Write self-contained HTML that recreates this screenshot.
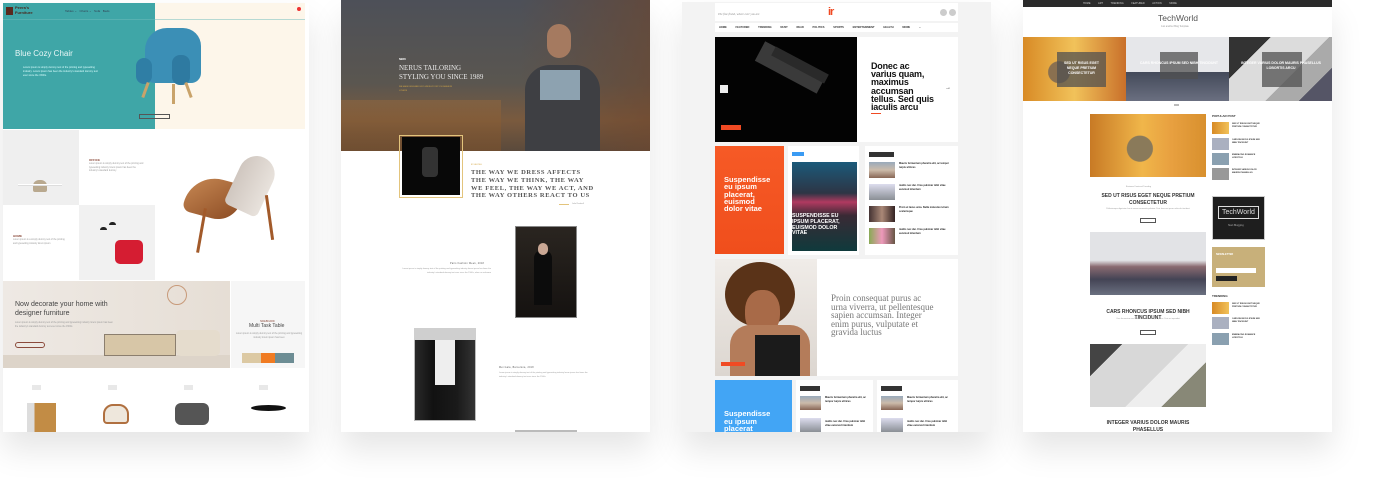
<!DOCTYPE html>
<html><head><meta charset="utf-8"><style>
*{margin:0;padding:0;box-sizing:border-box}
body{width:1382px;height:482px;background:#fff;position:relative;overflow:hidden;font-family:"Liberation Sans",sans-serif}
.a{position:absolute}
.sh{box-shadow:0 18px 30px rgba(0,0,0,.10)}
.t{position:absolute;font-size:3px;color:#999;line-height:4px}
.ln{position:absolute;height:1px;background:#ccc}
</style></head><body>

<!-- PANEL 1 -->
<div class="a sh" style="left:3px;top:3px;width:306px;height:429px;background:#fff"></div>
<div class="a" style="left:3px;top:3px;width:152px;height:126px;background:#3fa6a7"></div>
<div class="a" style="left:155px;top:3px;width:150px;height:126px;background:#fdf6ea"></div>
<div class="ln" style="left:3px;top:19px;width:302px;background:#6fbcbc;opacity:.5"></div>
<div class="a" style="left:6px;top:7px;width:7px;height:8px;background:#5a2a1f"></div>
<div class="a" style="left:15px;top:6px;font-size:4px;color:#4a2a20;font-weight:bold;line-height:4.5px">Peera's<br>Furniture</div>
<div class="t" style="left:65px;top:9px;color:#345">Tables ⌄ &nbsp; Chairs ⌄ &nbsp; Sofa &nbsp; Beds</div>
<div class="a" style="left:297px;top:7px;width:4px;height:4px;border-radius:50%;background:#e33"></div>
<div class="a" style="left:15px;top:49px;font-size:8px;color:#e8f6f6">Blue Cozy Chair</div>
<div class="t" style="left:23px;top:66px;width:75px;color:#dff;font-size:2.5px;line-height:4px">Lorem ipsum is simply dummy text of the printing and typesetting industry. Lorem ipsum has been the industry's standard dummy text ever since the 1500s.</div>
<div class="a" style="left:139px;top:114px;width:31px;height:5px;border:1px solid #555"></div>
<!-- blue chair -->
<div class="a" style="left:145px;top:28px;width:56px;height:55px;background:#3b8fb6;border-radius:22px 18px 10px 10px"></div>
<div class="a" style="left:136px;top:58px;width:16px;height:26px;background:#2f7ea5;border-radius:8px"></div>
<div class="a" style="left:172px;top:55px;width:18px;height:30px;background:#2e7aa1;border-radius:8px"></div>
<div class="a" style="left:144px;top:82px;width:3px;height:16px;background:#c9a36a;transform:rotate(20deg)"></div>
<div class="a" style="left:172px;top:84px;width:3px;height:20px;background:#c9a36a"></div>
<div class="a" style="left:187px;top:82px;width:3px;height:16px;background:#c9a36a;transform:rotate(-20deg)"></div>
<!-- second row -->
<div class="a" style="left:3px;top:130px;width:76px;height:75px;background:#efefef"></div>
<div class="a" style="left:33px;top:180px;width:14px;height:12px;background:#b9a98f;border-radius:6px 6px 2px 2px"></div>
<div class="a" style="left:18px;top:184px;width:44px;height:2px;background:#fff;border-bottom:1px solid #ddd"></div>
<div class="t" style="left:89px;top:158px;color:#8b4a3b;font-weight:bold">OFFICE</div>
<div class="t" style="left:89px;top:163px;width:55px;font-size:2.3px;line-height:3.5px">Lorem ipsum is simply dummy text of the printing and typesetting industry lorem ipsum has been the industry's standard dummy</div>
<div class="a" style="left:79px;top:205px;width:76px;height:75px;background:#f1f1f1"></div>
<div class="a" style="left:115px;top:240px;width:28px;height:24px;background:#d51d32;border-radius:5px"></div>
<div class="a" style="left:100px;top:227px;width:7px;height:3px;background:#222;border-radius:3px 3px 0 0"></div>
<div class="a" style="left:109px;top:222px;width:7px;height:3px;background:#222;border-radius:3px 3px 0 0"></div>
<div class="t" style="left:13px;top:234px;color:#8b4a3b;font-weight:bold">HOME</div>
<div class="t" style="left:13px;top:239px;width:55px;font-size:2.3px;line-height:3.5px">Lorem ipsum is a simply dummy text of the printing and typesetting industry lorem ipsum</div>
<!-- wood chair -->
<div class="a" style="left:186px;top:178px;width:55px;height:40px;background:linear-gradient(135deg,#c98a55,#8a4a22);border-radius:40px 10px 30px 10px;transform:rotate(15deg)"></div>
<div class="a" style="left:234px;top:155px;width:36px;height:58px;background:linear-gradient(90deg,#d0c7c0,#e8e2dc);border-radius:20px 20px 6px 6px;transform:rotate(25deg)"></div>
<div class="a" style="left:200px;top:208px;width:3px;height:45px;background:#a25a2a;transform:rotate(10deg)"></div>
<div class="a" style="left:268px;top:195px;width:3px;height:45px;background:#a25a2a;transform:rotate(-8deg)"></div>
<!-- banner -->
<div class="a" style="left:3px;top:281px;width:227px;height:87px;background:linear-gradient(90deg,#eee9e4,#e6ded5)"></div>
<div class="a" style="left:3px;top:355px;width:227px;height:13px;background:#ddd4c9"></div>
<div class="a" style="left:104px;top:334px;width:72px;height:22px;background:#d7c6a7;border:1px solid #8b7e6e"></div>
<div class="a" style="left:176px;top:330px;width:44px;height:26px;background:#e5dccd;border-radius:5px"></div>
<div class="a" style="left:167px;top:285px;width:20px;height:20px;border:1px solid #c89a7a;border-radius:50%"></div>
<div class="a" style="left:15px;top:300px;font-size:7px;color:#444;line-height:9px">Now decorate your home with<br>designer furniture</div>
<div class="t" style="left:15px;top:322px;width:100px;font-size:2.3px;line-height:3.5px">Lorem ipsum is simply dummy text of the printing and typesetting industry lorem ipsum has been the industry's standard dummy text ever since the 1500s</div>
<div class="a" style="left:15px;top:342px;width:30px;height:6px;border:1px solid #8b4a3b;border-radius:4px"></div>
<div class="a" style="left:231px;top:281px;width:74px;height:87px;background:#f6f6f6"></div>
<div class="t" style="left:260px;top:320px;font-size:2.5px;color:#8b4a3b">SIDEBOARD</div>
<div class="a" style="left:249px;top:323px;font-size:5px;color:#444">Multi Task Table</div>
<div class="t" style="left:236px;top:333px;width:66px;font-size:2.3px;text-align:center;line-height:3.5px">Lorem ipsum is simply dummy text of the printing and typesetting industry lorem ipsum has been</div>
<div class="a" style="left:242px;top:353px;width:52px;height:10px;background:linear-gradient(90deg,#dcc9a3 0 37%,#f07b22 37% 63%,#6d8d94 63%)"></div>
<!-- products -->
<div class="a" style="left:32px;top:385px;width:9px;height:5px;background:#e8e8e8"></div>
<div class="a" style="left:108px;top:385px;width:9px;height:5px;background:#e8e8e8"></div>
<div class="a" style="left:184px;top:385px;width:9px;height:5px;background:#e8e8e8"></div>
<div class="a" style="left:259px;top:385px;width:9px;height:5px;background:#e8e8e8"></div>
<div class="a" style="left:27px;top:403px;width:29px;height:29px;background:linear-gradient(90deg,#ddd 0 25%,#c28c45 25%)"></div>
<div class="a" style="left:103px;top:404px;width:26px;height:20px;background:#eee7dc;border-radius:10px 10px 4px 4px;border:2px solid #b07040"></div>
<div class="a" style="left:175px;top:403px;width:34px;height:22px;background:#555;border-radius:6px"></div>
<div class="a" style="left:251px;top:405px;width:35px;height:6px;background:#111;border-radius:50%"></div>

<!-- PANEL 2 -->
<div class="a sh" style="left:341px;top:0;width:309px;height:432px;background:#fff"></div>
<div class="a" style="left:341px;top:0;width:309px;height:151px;background:linear-gradient(180deg,#4d5058 0%,#5a5650 55%,#7a5a3e 80%,#5a4a3c 100%)"></div>
<div class="a" style="left:341px;top:100px;width:160px;height:51px;background:linear-gradient(180deg,rgba(160,110,60,.4),rgba(120,80,45,.7))"></div>
<div class="a" style="left:520px;top:0;width:130px;height:151px;background:linear-gradient(90deg,rgba(0,0,0,0),rgba(110,70,45,.6))"></div>
<div class="a" style="left:525px;top:65px;width:75px;height:86px;background:#3e3f43;border-radius:25px 25px 0 0"></div>
<div class="a" style="left:540px;top:70px;width:40px;height:30px;background:#8da2b0"></div>
<div class="a" style="left:547px;top:24px;width:24px;height:34px;background:#a57a60;border-radius:12px"></div>
<div class="a" style="left:399px;top:58px;font-size:2.5px;color:#fff;font-weight:bold">NERU</div>
<div class="a" style="left:399px;top:64px;font-family:'Liberation Serif',serif;font-size:7px;color:#e8e8e8;line-height:9px">NERUS TAILORING<br>STYLING YOU SINCE 1989</div>
<div class="a" style="left:399px;top:85px;font-size:2px;color:#d4a848;width:60px;line-height:4px">WE HAVE DESIGNED EXCLUSIVELY FOR YOU FASHION LOVERS</div>
<div class="a" style="left:399px;top:135px;width:64px;height:63px;border:1px solid #e3c47c"></div>
<div class="a" style="left:402px;top:137px;width:58px;height:58px;background:#080808"></div>
<div class="a" style="left:422px;top:147px;width:16px;height:30px;background:#333;border-radius:4px"></div>
<div class="a" style="left:471px;top:164px;font-size:2px;color:#d4a848">BY HEYSEL</div>
<div class="a" style="left:471px;top:169px;font-family:'Liberation Serif',serif;font-size:6.5px;font-weight:bold;color:#555;line-height:7.8px;letter-spacing:.6px">THE WAY WE DRESS AFFECTS<br>THE WAY WE THINK, THE WAY<br>WE FEEL, THE WAY WE ACT, AND<br>THE WAY OTHERS REACT TO US</div>
<div class="a" style="left:559px;top:204px;width:10px;height:1px;background:#e3c47c"></div>
<div class="t" style="left:572px;top:202px;font-size:2px">Julia Rodwell</div>
<div class="a" style="left:515px;top:226px;width:62px;height:92px;background:linear-gradient(180deg,#2a2520,#151210);border:1px solid #888"></div>
<div class="a" style="left:534px;top:250px;width:18px;height:55px;background:#0c0c0c;border-radius:8px 8px 0 0"></div>
<div class="a" style="left:538px;top:243px;width:10px;height:12px;background:#c9a794;border-radius:5px"></div>
<div class="t" style="left:450px;top:262px;font-size:2.3px;color:#555;letter-spacing:.3px">Paris Fashion Week, 2018</div>
<div class="t" style="left:401px;top:268px;width:90px;font-size:2px;line-height:3.8px;text-align:right">Lorem ipsum is simply dummy text of the printing and typesetting industry lorem ipsum has been the industry's standard dummy text ever since the 1500s, when an unknown</div>
<div class="a" style="left:414px;top:328px;width:62px;height:93px;background:linear-gradient(90deg,#2a2a2a,#111 30%,#1a1a1a 70%,#333);border:1px solid #bbb"></div>
<div class="a" style="left:435px;top:340px;width:20px;height:45px;background:#eee"></div>
<div class="a" style="left:414px;top:328px;width:62px;height:12px;background:#cfcfcf"></div>
<div class="t" style="left:499px;top:366px;font-size:2.3px;color:#555;letter-spacing:.3px">Met Gala, Barcelona, 2018</div>
<div class="t" style="left:499px;top:372px;width:90px;font-size:2px;line-height:3.8px">Lorem ipsum is simply dummy text of the printing and typesetting industry lorem ipsum has been the industry's standard dummy text ever since the 1500s</div>
<div class="a" style="left:515px;top:430px;width:62px;height:2px;background:#bbb"></div>

<!-- PANEL 3 -->
<div class="a sh" style="left:682px;top:2px;width:309px;height:430px;background:#f3f3f3"></div>
<div class="a" style="left:715px;top:3px;width:243px;height:18px;background:#fff"></div>
<div class="t" style="left:718px;top:12px;font-family:'Liberation Serif',serif;font-size:3px;color:#888;font-style:italic">The fine finish, where ever you are</div>
<div class="a" style="left:828px;top:6px;font-size:11px;font-weight:bold;color:#f04a23;letter-spacing:-1px">ir</div>
<div class="a" style="left:940px;top:9px;width:7px;height:7px;border-radius:50%;background:#ccc"></div>
<div class="a" style="left:949px;top:9px;width:7px;height:7px;border-radius:50%;background:#ccc"></div>
<div class="a" style="left:715px;top:23px;width:243px;height:9px;background:#fff"></div>
<div class="t" style="left:719px;top:26px;font-size:2.6px;color:#333;font-weight:bold;word-spacing:8px">HOME FEATURED TRENDING MUST&nbsp;READ POLITICS SPORTS ENTERTAINMENT HEALTH MORE&nbsp;⌄</div>
<div class="a" style="left:715px;top:37px;width:142px;height:105px;background:#030303"></div>
<div class="a" style="left:760px;top:40px;width:70px;height:22px;background:#3a3a3a;transform:rotate(28deg);transform-origin:left"></div>
<div class="a" style="left:770px;top:60px;width:60px;height:10px;background:#2a2a2a;transform:rotate(28deg)"></div>
<div class="a" style="left:720px;top:85px;width:8px;height:8px;background:#eee"></div>
<div class="a" style="left:721px;top:125px;width:20px;height:5px;background:#f04a23"></div>
<div class="a" style="left:857px;top:37px;width:101px;height:105px;background:#fff"></div>
<div class="a" style="left:871px;top:62px;font-size:9px;font-weight:bold;color:#111;line-height:8.2px;letter-spacing:-.2px">Donec ac<br>varius quam,<br>maximus<br>accumsan<br>tellus. Sed quis<br>iaculis arcu</div>
<div class="a" style="left:871px;top:113px;width:10px;height:1px;background:#f04a23"></div>
<div class="a" style="left:945px;top:85px;font-size:6px;color:#333">→</div>
<div class="a" style="left:715px;top:146px;width:69px;height:108px;background:linear-gradient(180deg,#f65a26,#f04e1c)"></div>
<div class="a" style="left:724px;top:176px;font-size:7.5px;font-weight:bold;color:#fff;line-height:7.3px">Suspendisse<br>eu ipsum<br>placerat,<br>euismod<br>dolor vitae</div>
<div class="a" style="left:788px;top:146px;width:71px;height:109px;background:#fff"></div>
<div class="a" style="left:792px;top:152px;width:12px;height:4px;background:#3a9bf3"></div>
<div class="a" style="left:792px;top:162px;width:65px;height:89px;background:linear-gradient(180deg,#1b5a7a 0%,#2d3545 35%,#b03a60 45%,#3a2a35 60%,#0f3a3c 100%)"></div>
<div class="a" style="left:792px;top:214px;font-size:5.3px;color:#fff;font-weight:bold;line-height:5.8px">SUSPENDISSE EU<br>IPSUM PLACERAT,<br>EUISMOD DOLOR<br>VITAE</div>
<div class="a" style="left:865px;top:146px;width:93px;height:109px;background:#fff"></div>
<div class="a" style="left:869px;top:152px;width:25px;height:5px;background:#333"></div>
<div class="a" style="left:869px;top:162px;width:26px;height:16px;background:linear-gradient(180deg,#9ab 0,#cba 50%,#865 100%)"></div>
<div class="a" style="left:869px;top:184px;width:26px;height:16px;background:linear-gradient(180deg,#dde,#8a8f95)"></div>
<div class="a" style="left:869px;top:206px;width:26px;height:16px;background:linear-gradient(90deg,#433,#a87,#322)"></div>
<div class="a" style="left:869px;top:228px;width:26px;height:16px;background:linear-gradient(90deg,#8a5,#e9b,#654)"></div>
<div class="t" style="left:899px;top:162px;width:55px;font-size:2.5px;color:#222;font-weight:bold;line-height:3.6px">Mauris fermentum pharetra elit, ac tempor turpis ultrices</div>
<div class="t" style="left:899px;top:184px;width:55px;font-size:2.5px;color:#222;font-weight:bold;line-height:3.6px">mattis nec dui. Cras pulvinar nibh vitae euismod interdum</div>
<div class="t" style="left:899px;top:206px;width:55px;font-size:2.5px;color:#222;font-weight:bold;line-height:3.6px">Proin et lacus urna. Nulla molestie rutrum scelerisque</div>
<div class="t" style="left:899px;top:228px;width:55px;font-size:2.5px;color:#222;font-weight:bold;line-height:3.6px">mattis nec dui. Cras pulvinar nibh vitae euismod interdum</div>
<div class="a" style="left:715px;top:259px;width:102px;height:117px;background:linear-gradient(180deg,#f0ece8 0%,#dcd6d0 100%)"></div>
<div class="a" style="left:725px;top:262px;width:70px;height:65px;background:#5a3318;border-radius:50%"></div>
<div class="a" style="left:745px;top:290px;width:35px;height:45px;background:#a86a48;border-radius:45%"></div>
<div class="a" style="left:730px;top:325px;width:80px;height:51px;background:#b47c5a;border-radius:20px 20px 0 0"></div>
<div class="a" style="left:755px;top:335px;width:45px;height:41px;background:#1b1b1b"></div>
<div class="a" style="left:721px;top:362px;width:24px;height:4px;background:#f04a23"></div>
<div class="a" style="left:817px;top:259px;width:141px;height:117px;background:#fff"></div>
<div class="a" style="left:831px;top:294px;font-family:'Liberation Serif',serif;font-size:9px;color:#777;line-height:8.5px">Proin consequat purus ac<br>urna viverra, ut pellentesque<br>sapien accumsan. Integer<br>enim purus, vulputate et<br>gravida luctus</div>
<div class="a" style="left:715px;top:380px;width:77px;height:52px;background:#42a5f5"></div>
<div class="a" style="left:724px;top:410px;font-size:7.5px;font-weight:bold;color:#fff;line-height:7.5px">Suspendisse<br>eu ipsum<br>placerat</div>
<div class="a" style="left:796px;top:380px;width:77px;height:52px;background:#fff"></div>
<div class="a" style="left:877px;top:380px;width:81px;height:52px;background:#fff"></div>
<div class="a" style="left:800px;top:386px;width:20px;height:5px;background:#333"></div>
<div class="a" style="left:881px;top:386px;width:21px;height:5px;background:#333"></div>
<div class="a" style="left:800px;top:396px;width:21px;height:14px;background:linear-gradient(180deg,#9ab,#cba,#865)"></div>
<div class="a" style="left:881px;top:396px;width:22px;height:14px;background:linear-gradient(180deg,#9ab,#cba,#865)"></div>
<div class="a" style="left:800px;top:418px;width:21px;height:14px;background:linear-gradient(180deg,#dde,#8a8f95)"></div>
<div class="a" style="left:881px;top:418px;width:22px;height:14px;background:linear-gradient(180deg,#dde,#8a8f95)"></div>
<div class="t" style="left:825px;top:396px;width:45px;font-size:2.5px;color:#222;font-weight:bold;line-height:4px">Mauris fermentum pharetra elit, ac tempor turpis ultrices</div>
<div class="t" style="left:907px;top:396px;width:45px;font-size:2.5px;color:#222;font-weight:bold;line-height:4px">Mauris fermentum pharetra elit, ac tempor turpis ultrices</div>
<div class="t" style="left:825px;top:420px;width:45px;font-size:2.5px;color:#222;font-weight:bold;line-height:4px">mattis nec dui. Cras pulvinar nibh vitae euismod interdum</div>
<div class="t" style="left:907px;top:420px;width:45px;font-size:2.5px;color:#222;font-weight:bold;line-height:4px">mattis nec dui. Cras pulvinar nibh vitae euismod interdum</div>

<!-- PANEL 4 -->
<div class="a sh" style="left:1023px;top:0;width:309px;height:432px;background:#fff"></div>
<div class="a" style="left:1023px;top:0;width:309px;height:7px;background:#2b2b2b"></div>
<div class="t" style="left:1083px;top:2px;font-size:2.5px;color:#ccc;word-spacing:7px">HOME ART TRENDING FEATURED ACTION MORE</div>
<div class="a" style="left:1158px;top:13px;font-size:8.5px;color:#555">TechWorld</div>
<div class="t" style="left:1161px;top:25px;font-size:2.3px">Just another Blog Template</div>
<div class="a" style="left:1023px;top:37px;width:103px;height:64px;background:radial-gradient(circle at 35% 55%,#8a7050 0 14%,transparent 15%),linear-gradient(90deg,#d88a25,#f1c25a 50%,#c9702a)"></div>
<div class="a" style="left:1126px;top:37px;width:103px;height:64px;background:linear-gradient(180deg,#e6e7ea 0 55%,#444a5a 55%,#6a6f80)"></div>
<div class="a" style="left:1229px;top:37px;width:103px;height:64px;background:linear-gradient(135deg,#333 0 25%,#dcdcdc 25% 60%,#aaa 60% 80%,#556 80%)"></div>
<div class="a" style="left:1057px;top:52px;width:49px;height:35px;background:rgba(80,80,80,.75)"></div>
<div class="a" style="left:1160px;top:52px;width:38px;height:27px;background:rgba(80,80,80,.75)"></div>
<div class="a" style="left:1262px;top:52px;width:40px;height:35px;background:rgba(80,80,80,.75)"></div>
<div class="a" style="left:1059px;top:61px;width:45px;font-size:3.5px;color:#fff;font-weight:bold;text-align:center;line-height:5px">SED UT RISUS EGET NEQUE PRETIUM CONSECTETUR</div>
<div class="a" style="left:1138px;top:61px;width:82px;font-size:3.5px;color:#fff;font-weight:bold;text-align:center;line-height:5px">CARS RHONCUS IPSUM SED NIBH TINCIDUNT</div>
<div class="a" style="left:1240px;top:61px;width:82px;font-size:3.5px;color:#fff;font-weight:bold;text-align:center;line-height:5px">INTEGER VARIUS DOLOR MAURIS PHASELLUS LOBORTIS ARCU</div>
<div class="a" style="left:1174px;top:104px;width:5px;height:2px;background:#bbb"></div>
<div class="a" style="left:1090px;top:114px;width:116px;height:63px;background:radial-gradient(circle at 43% 55%,#8a7a5a 0 17%,transparent 18%),linear-gradient(90deg,#c87a25,#f0b64a 45%,#e8a040 70%,#d8902e)"></div>
<div class="t" style="left:1126px;top:185px;font-size:2px">Business Featured Trending</div>
<div class="a" style="left:1098px;top:193px;width:100px;font-size:5px;font-weight:bold;color:#333;text-align:center;line-height:7px">SED UT RISUS EGET NEQUE PRETIUM CONSECTETUR</div>
<div class="t" style="left:1093px;top:208px;width:110px;font-size:2px;text-align:center;line-height:3.5px">Pellentesque dignissim leo at massa venenatis pulvinar. Duis rhoncus ipsum vehicula tincidunt</div>
<div class="a" style="left:1140px;top:218px;width:16px;height:5px;border:1px solid #555"></div>
<div class="a" style="left:1090px;top:232px;width:116px;height:63px;background:linear-gradient(180deg,#e2e3e6 0 45%,#8a6a70 55%,#445 75%,#6a7080)"></div>
<div class="a" style="left:1098px;top:309px;width:100px;font-size:5px;font-weight:bold;color:#333;text-align:center">CARS RHONCUS IPSUM SED NIBH TINCIDUNT</div>
<div class="t" style="left:1093px;top:318px;width:110px;font-size:2px;text-align:center;line-height:3.5px">Cars fermentum sed nibh tincidunt ullamcorper purus. Duis ac imperdiet</div>
<div class="a" style="left:1140px;top:330px;width:16px;height:5px;border:1px solid #555"></div>
<div class="a" style="left:1090px;top:344px;width:116px;height:63px;background:linear-gradient(135deg,#444 0 18%,#d8d8d8 18% 55%,#eee 55% 75%,#887 75%)"></div>
<div class="a" style="left:1098px;top:420px;width:100px;font-size:5px;font-weight:bold;color:#333;text-align:center;line-height:7px">INTEGER VARIUS DOLOR MAURIS PHASELLUS</div>
<!-- sidebar -->
<div class="t" style="left:1212px;top:114px;font-size:3px;color:#333;font-weight:bold">POPULAR POST</div>
<div class="a" style="left:1212px;top:122px;width:17px;height:12px;background:linear-gradient(90deg,#d88a25,#f1c25a)"></div>
<div class="a" style="left:1212px;top:138px;width:17px;height:12px;background:#aab0c0"></div>
<div class="a" style="left:1212px;top:153px;width:17px;height:12px;background:#8aa0b0"></div>
<div class="a" style="left:1212px;top:168px;width:17px;height:12px;background:#999"></div>
<div class="t" style="left:1232px;top:123px;width:30px;font-size:2px;color:#333;font-weight:bold;line-height:3.3px">SED UT RISUS EGET NEQUE PRETIUM CONSECTETUR</div>
<div class="t" style="left:1232px;top:139px;width:30px;font-size:2px;color:#333;font-weight:bold;line-height:3.3px">CARS RHONCUS IPSUM SED NIBH TINCIDUNT</div>
<div class="t" style="left:1232px;top:154px;width:30px;font-size:2px;color:#333;font-weight:bold;line-height:3.3px">EMBRACING ROMANCE LIFESTYLE</div>
<div class="t" style="left:1232px;top:169px;width:30px;font-size:2px;color:#333;font-weight:bold;line-height:3.3px">INTEGER VARIUS DOLOR MAURIS PHASELLUS</div>
<div class="a" style="left:1212px;top:196px;width:53px;height:44px;background:#1e1e1e;border:1px solid #ccc"></div>
<div class="a" style="left:1218px;top:206px;width:41px;height:13px;border:1px solid #ddd;font-size:7px;color:#ddd;text-align:center;line-height:12px">TechWorld</div>
<div class="t" style="left:1228px;top:224px;font-size:2.5px;color:#aaa">Start Blogging</div>
<div class="a" style="left:1212px;top:247px;width:53px;height:40px;background:#c8b07a"></div>
<div class="t" style="left:1216px;top:253px;font-size:2.5px;color:#fff;font-weight:bold">NEWSLETTER</div>
<div class="a" style="left:1216px;top:268px;width:40px;height:5px;background:#fff"></div>
<div class="a" style="left:1216px;top:276px;width:21px;height:5px;background:#222"></div>
<div class="t" style="left:1212px;top:294px;font-size:3px;color:#333;font-weight:bold">TRENDING</div>
<div class="a" style="left:1212px;top:302px;width:17px;height:12px;background:linear-gradient(90deg,#d88a25,#f1c25a)"></div>
<div class="a" style="left:1212px;top:317px;width:17px;height:12px;background:#aab0c0"></div>
<div class="a" style="left:1212px;top:333px;width:17px;height:12px;background:#8aa0b0"></div>
<div class="t" style="left:1232px;top:303px;width:30px;font-size:2px;color:#333;font-weight:bold;line-height:3.3px">SED UT RISUS EGET NEQUE PRETIUM CONSECTETUR</div>
<div class="t" style="left:1232px;top:318px;width:30px;font-size:2px;color:#333;font-weight:bold;line-height:3.3px">CARS RHONCUS IPSUM SED NIBH TINCIDUNT</div>
<div class="t" style="left:1232px;top:334px;width:30px;font-size:2px;color:#333;font-weight:bold;line-height:3.3px">EMBRACING ROMANCE LIFESTYLE</div>
</body></html>
